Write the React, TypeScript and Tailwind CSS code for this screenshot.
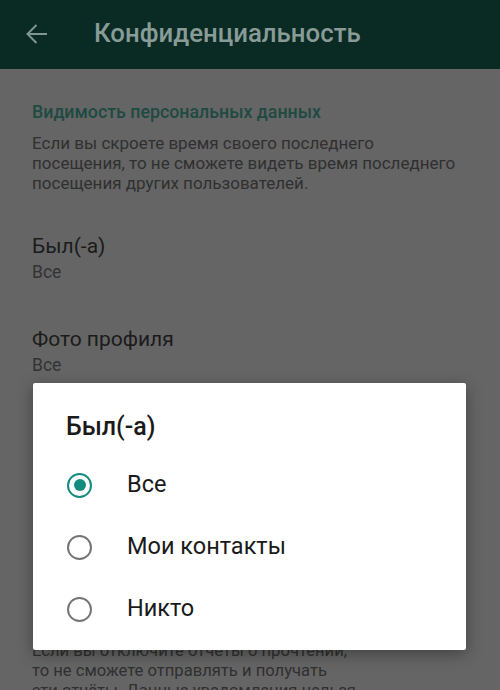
import React from "react";

const items = [
  { title: "Был(-а)", value: "Все" },
  { title: "Фото профиля", value: "Все" },
];

const options = ["Все", "Мои контакты", "Никто"];

function Radio({ checked }: { checked: boolean }) {
  return checked ? (
    <span className="flex h-[25px] w-[25px] shrink-0 items-center justify-center rounded-full border-[2.5px] border-[#128c7e]">
      <span className="h-[12px] w-[12px] rounded-full bg-[#128c7e]" />
    </span>
  ) : (
    <span className="h-[25px] w-[25px] shrink-0 rounded-full border-[2.5px] border-[#757575]" />
  );
}

export default function App() {
  return (
    <div className="relative h-[690px] w-[500px] overflow-hidden bg-[#656565] font-['Roboto','Noto_Sans',sans-serif]">
      {/* toolbar (dimmed) */}
      <div className="flex h-[69px] items-center bg-[#0a2a24]">
        <svg
          className="ml-[26px] mt-[-2px]"
          width="21"
          height="20"
          viewBox="0 0 21 20"
          fill="none"
          stroke="#7f9591"
          strokeWidth="2"
        >
          <path d="M1.5 10H21M10.5 1L1.5 10l9 9" />
        </svg>
        <span className="ml-[47px] mt-[-2px] text-[25.8px] font-medium text-[#889b97]">
          Конфиденциальность
        </span>
      </div>

      {/* settings list behind the dialog */}
      <div className="px-8 pt-[33px]">
        <div className="text-[17.8px] font-medium leading-[20px] text-[#1f4a42]">
          Видимость персональных данных
        </div>
        <p className="mt-[11px] text-[17px] leading-[20px] text-[#303030]">
          Если вы скроете время своего последнего
          <br />
          посещения, то не сможете видеть время последнего
          <br />
          посещения других пользователей.
        </p>
        {items.map((item, i) => (
          <div key={item.title} className={i === 0 ? "mt-[41px]" : "mt-[45px]"}>
            <div className="text-[21px] leading-[24px] text-[#1b1b1b]">{item.title}</div>
            <div className="mt-[4px] text-[17.5px] leading-[20px] text-[#333333]">{item.value}</div>
          </div>
        ))}
        <p className="mt-[266px] text-[16.6px] leading-[20px] text-[#303030]">
          Если вы отключите отчеты о прочтении,
          <br />
          то не сможете отправлять и получать
          <br />
          эти отчёты. Данные уведомления нельзя
        </p>
      </div>

      {/* dialog */}
      <div className="absolute left-[33px] top-[383px] h-[267px] w-[433px] rounded-[2px] bg-white pt-[30px] shadow-[0_4px_16px_rgba(0,0,0,0.35)]">
        <div className="pl-[33px] text-[25px] font-medium leading-[28px] text-[#1a1a1a]">Был(-а)</div>
        <div className="mt-[13px]">
          {options.map((opt, i) => (
            <div key={opt} className="flex h-[62px] items-center pl-[34px]">
              <Radio checked={i === 0} />
              <span className="ml-[35px] text-[23.5px] text-[#1a1a1a]">{opt}</span>
            </div>
          ))}
        </div>
      </div>
    </div>
  );
}
